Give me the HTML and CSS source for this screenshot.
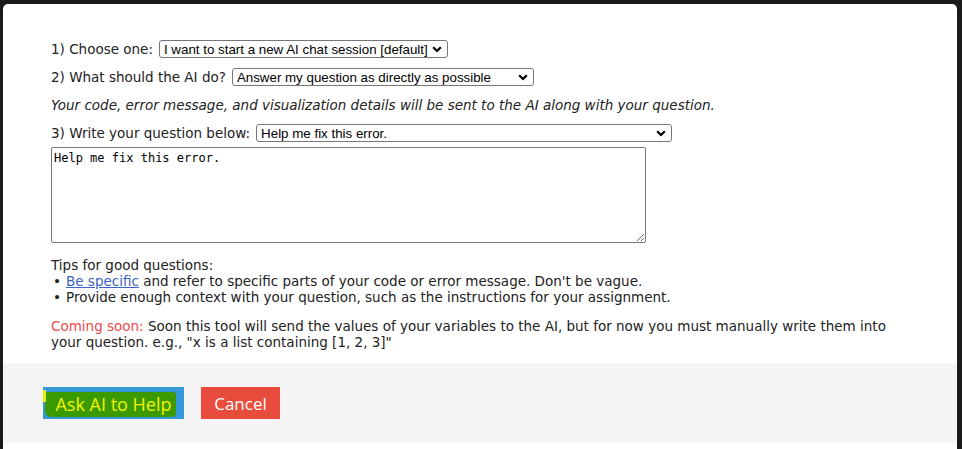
FILE: index.html
```html
<!DOCTYPE html>
<html>
<head>
<meta charset="utf-8">
<link rel="stylesheet" href="styles.css">
</head>
<body>
<div class="card">
  <div class="content">
    <div class="row">
      <span class="label">1) Choose one:</span>
      <select class="sel sel-1"><option>I want to start a new AI chat session [default]</option></select>
    </div>
    <div class="row">
      <span class="label">2) What should the AI do?</span>
      <select class="sel sel-2"><option>Answer my question as directly as possible</option></select>
    </div>
    <div class="row note">Your code, error message, and visualization details will be sent to the AI along with your question.</div>
    <div class="row">
      <span class="label">3) Write your question below:</span>
      <select class="sel sel-3"><option>Help me fix this error.</option></select>
    </div>
    <textarea class="question">Help me fix this error.</textarea>
    <div class="tips">
      <div>Tips for good questions:</div>
      <ul class="tip-list">
        <li><span><a href="#" class="link">Be specific</a> and refer to specific parts of your code or error message. Don't be vague.</span></li>
        <li><span>Provide enough context with your question, such as the instructions for your assignment.</span></li>
      </ul>
    </div>
    <p class="soon"><span class="soon-label">Coming soon:</span> Soon this tool will send the values of your variables to the AI, but for now you must manually write them into your question. e.g., "x is a list containing [1, 2, 3]"</p>
  </div>
  <div class="footer">
    <button class="btn btn-ask"><span class="mark"></span><span class="hl">Ask AI to Help</span></button>
    <button class="btn btn-cancel">Cancel</button>
  </div>
</div>
</body>
</html>
```
FILE: styles.css
```css
html, body {
  margin: 0;
  padding: 0;
  height: 100%;
}
body {
  background: #1b1b1b;
  font-family: "DejaVu Sans", Verdana, sans-serif;
  font-size: 13.5px;
  color: #222;
  overflow: hidden;
}
.card {
  margin: 4px 5px 0 3px;
  background: #fff;
  border-radius: 5px 5px 0 0;
  height: 445px;
}
.content {
  padding: 36px 48px 0 48px;
}
.row {
  display: flex;
  align-items: center;
  gap: 6px;
  height: 18px;
  margin-bottom: 10px;
  white-space: nowrap;
}
.label {
  line-height: 16px;
}
.note {
  font-style: italic;
}
.sel {
  -webkit-appearance: none;
  appearance: none;
  box-sizing: border-box;
  height: 18px;
  border: 1px solid #767676;
  border-radius: 3px;
  padding: 0 16px 0 4px;
  margin: 0;
  font-family: "Liberation Sans", Arial, sans-serif;
  font-size: 13.33px;
  color: #000;
  background: #fff url("data:image/svg+xml;utf8,<svg xmlns='http://www.w3.org/2000/svg' width='10' height='7' viewBox='0 0 10 7'><path d='M1.2 1.2 L5 5 L8.8 1.2' fill='none' stroke='black' stroke-width='2.2'/></svg>") no-repeat right 5px center;
}
.sel-1 { width: 289px; }
.sel-2 { width: 302px; }
.sel-3 { width: 416px; }
.question {
  display: block;
  box-sizing: border-box;
  width: 595px;
  height: 96px;
  margin: -5px 0 0 0;
  border: 1px solid #767676;
  border-radius: 2px;
  padding: 3px 2px;
  font-family: "DejaVu Sans Mono", monospace;
  font-size: 12px;
  color: #000;
}
.tips {
  margin-top: 14px;
  line-height: 16px;
}
.tip-list {
  list-style: none;
  margin: 0;
  padding: 0;
}
.tip-list li {
  display: flex;
}
.tip-list li::before {
  content: "\2022";
  width: 15px;
  flex: none;
  padding-left: 2px;
  box-sizing: border-box;
}
.link {
  color: #3b63c4;
  text-decoration: underline;
}
.soon {
  margin: 13px 0 0 0;
  line-height: 16px;
}
.soon-label {
  color: #f04848;
}
.footer {
  margin-top: 13px;
  background: #f4f4f4;
  height: 80px;
  box-sizing: border-box;
  padding: 24px 40px;
  display: flex;
  gap: 17px;
  border-radius: 0 0 4px 4px;
}
.btn {
  height: 32px;
  border: none;
  border-radius: 0;
  font-family: "Open Sans", "Segoe UI", sans-serif;
  font-size: 18px;
  padding: 0;
  margin: 0;
  display: flex;
  align-items: center;
  justify-content: center;
}
.btn-ask {
  width: 141px;
  background: #3498db;
  position: relative;
}
.hl {
  background: #3a9a00;
  color: #f2f200;
  padding: 2px 4px 2px 10px;
  margin-top: 3px;
  margin-left: -6px;
  border-radius: 1px 3px 4px 6px;
  line-height: 21px;
}
.mark {
  position: absolute;
  left: 0;
  top: 3px;
  width: 3px;
  height: 12px;
  background: #e6f000;
}
.btn-cancel {
  width: 79px;
  background: #e74c3c;
  color: #fff;
  font-size: 17px;
}
```
